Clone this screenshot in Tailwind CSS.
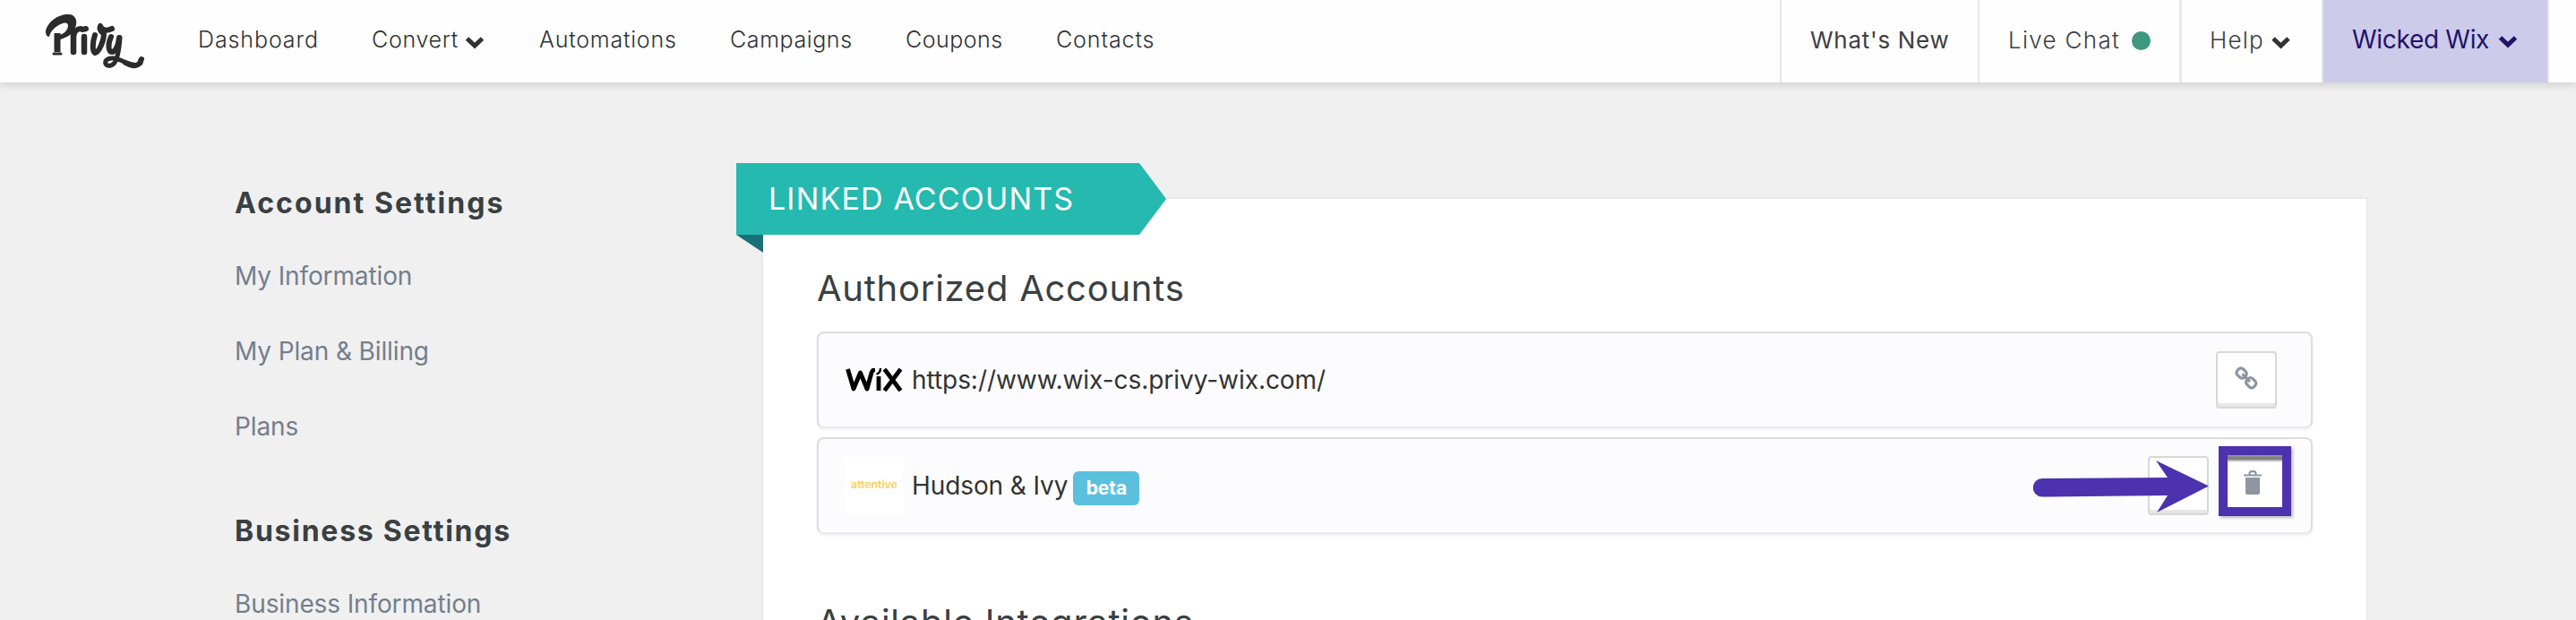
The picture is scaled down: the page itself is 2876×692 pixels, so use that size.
<!DOCTYPE html>
<html lang="en">
<head>
<meta charset="utf-8">
<title>Linked Accounts</title>
<script src="https://cdn.jsdelivr.net/npm/@tailwindcss/browser@4"></script>
</head>
<body class="w-[2876px] h-[692px] overflow-hidden bg-[#f0f0f0] font-['Inter','Liberation_Sans',sans-serif] text-[#333]">
<div class="h-[692px] overflow-hidden flex flex-col">
<header class="relative z-10 h-[92px] shrink-0 bg-[#fefefe] flex shadow-[0_2px_10px_rgba(0,0,0,0.16)]">
  <svg class="ml-[50px] mt-[14px] w-[112px] h-[64px] shrink-0" viewBox="0 0 112 64" fill="none" stroke="#2b2b2b" stroke-linecap="round" stroke-linejoin="round">
    <path d="M1 21C3 10 15 2 26 2C35 2 37 10 34 17C31 24 25 28 17 30L16 25C22 24 26 19 26 14C25 10 20 11 14 15C8 19 6 23 5 27C2 27 1 24 1 21Z" fill="#2b2b2b" stroke="none"/>
    <path d="M14 23V44" stroke-width="7" stroke-linecap="butt"/>
    <path d="M10 46L18 46" stroke-width="3"/>
    <path d="M32 24V44" stroke-width="6.500"/><path d="M32 27C33 20 37 18 40 18" stroke-width="6"/>
    <path d="M44 27V44" stroke-width="6.500"/><path d="M42 19L46 18" stroke-width="6"/>
    <path d="M56 25C53 34 53 43 56 45C61 44 66 31 66 24C61 20 61 17 62 15C64 20 69 21 75 18" stroke-width="6"/>
    <path d="M74 27C70 36 71 44 75 44C79 44 82 37 83 28" stroke-width="6"/>
    <path d="M84 28C83 38 83 48 78 56C73 62 66 59 68 54C74 46 88 56 98 58C105 60 108 57 107 53" stroke-width="5"/>
    <path d="M90 56C97 60 105 62 108 52" stroke-width="6"/>
  </svg>
  <nav class="flex ml-[59px] text-[25px] leading-[89px] font-light tracking-[0.9px] text-[#2f3336] whitespace-nowrap">
    <a class="w-[194px]">Dashboard</a>
    <a class="w-[187px] flex tracking-[0.7px]">Convert<svg class="ml-[7px] mt-[40px] w-[22px] h-[15px]" viewBox="0 0 22 15" fill="none" stroke="#333" stroke-width="5"><path d="M2.500 3L11 11L19.500 3"/></svg></a>
    <a class="w-[213px] tracking-[0.8px]">Automations</a>
    <a class="w-[196px] tracking-[0.6px]">Campaigns</a>
    <a class="w-[168px] tracking-[0.5px]">Coupons</a>
    <a>Contacts</a>
  </nav>
  <div class="ml-auto mr-[30px] flex text-[26px] leading-[90px] whitespace-nowrap text-[#3c4043]">
    <a class="w-[221px] border-l-2 border-[#e8e8e8] pl-[32px] tracking-[0.7px]">What's New</a>
    <a class="w-[225px] border-l-2 border-[#e8e8e8] pl-[32px] flex font-light tracking-[1.3px]">Live Chat<span class="ml-[13px] mt-[35px] size-[21px] rounded-full bg-[#3f977f]"></span></a>
    <a class="w-[159px] border-l-3 border-[#e8e8e8] pl-[31px] flex font-light tracking-[1.2px]">Help<svg class="ml-[7px] mt-[40px] w-[23px] h-[15px]" viewBox="0 0 22 15" fill="none" stroke="#333" stroke-width="5"><path d="M2.500 3L11 11L19.500 3"/></svg></a>
    <a class="w-[254px] border-x-2 border-[#e4e4e8] bg-[#cdcbea] pl-[32px] flex text-[28px] leading-[88px] tracking-[-0.3px] text-[#21136a]">Wicked Wix<svg class="ml-[10px] mt-[39px] w-[22px] h-[15px]" viewBox="0 0 22 15" fill="none" stroke="#21136a" stroke-width="5"><path d="M2.500 3L11 11L19.500 3"/></svg></a>
  </div>
</header>
<main class="flex h-[600px] shrink-0">
  <aside class="w-[850px] shrink-0 pl-[262px] pt-[104px] text-[28px] tracking-[-0.12px] text-[#737f8c]">
    <h2 class="h-[70px] leading-[62px] text-[32px] font-bold tracking-[2.05px] text-[#394042]">Account Settings</h2>
    <ul class="leading-[84px]"><li>My Information</li><li>My Plan &amp; Billing</li><li>Plans</li></ul>
    <h2 class="h-[70px] mt-[44px] leading-[62px] text-[32px] font-bold tracking-[1.75px] text-[#394042]">Business Settings</h2>
    <ul class="leading-[84px]"><li>Business Information</li></ul>
  </aside>
  <section class="relative mt-[128px] w-[1794px] h-[520px] shrink-0 border-2 border-[#e9e9ee] bg-white pl-[60px] pr-[60px] pt-[75px]">
    <div class="absolute left-[-30px] top-[-40px] w-[480px] h-[100px]">
      <svg class="absolute left-0 top-0 w-[480px] h-[100px]" viewBox="0 0 480 100"><path d="M0 0H450L480 40L450 80H0Z" fill="#25b9af"/><path d="M0 80H30V100Z" fill="#197177"/></svg>
      <span class="relative block pl-[36px] leading-[79px] text-[34px] tracking-[1.15px] text-white">LINKED ACCOUNTS</span>
    </div>
    <h3 class="h-[73px] leading-[50px] text-[40px] tracking-[0.75px] text-[#394042]">Authorized Accounts</h3>
    <div class="h-[108px] rounded-[8px] border-2 border-[#dcdde0] border-b-[#e9eaee] bg-[#fcfcfe] shadow-[0_2px_3px_rgba(0,0,0,0.06)] flex items-center pl-[30px] pr-[38px] text-[28px] tracking-[-0.05px]">
      <svg class="w-[64px] h-[26px]" viewBox="0 0 64 26" fill="none" stroke="#000" stroke-width="4.800" stroke-linejoin="round"><path d="M2.500 1L9 23L16.500 5L24 23L29 5C30 2 31 1.500 33 1.500"/><path d="M37 9V25"/><path d="M34.500 6.500C37 6 39 4 39 0" stroke-width="2.400"/><path d="M43.500 1L61.500 25M61.500 1L43.500 25"/></svg>
      <span class="ml-[10px]">https://www.wix-cs.privy-wix.com/</span>
      <span class="ml-auto w-[68px] h-[64px] rounded-[4px] border-2 border-[#d8d9d6] bg-white shadow-[inset_0_-4px_0_#e6e7e5] flex justify-center pt-[15px]">
        <svg class="w-[26px] h-[26px]" viewBox="0 0 26 26" fill="none" stroke="#8f96a1" stroke-width="3.200"><rect x="-5.500" y="-4.600" width="11" height="9.200" rx="3.600" transform="translate(7.600 7.600) rotate(45)"/><rect x="-5.500" y="-4.600" width="11" height="9.200" rx="3.600" transform="translate(18.200 18.200) rotate(45)"/><path d="M8.500 8.500L17 17"/></svg>
      </span>
    </div>
    <div class="relative mt-[10px] h-[108px] rounded-[8px] border-2 border-[#dcdde0] border-b-[#e9eaee] bg-[#fcfcfe] shadow-[0_2px_3px_rgba(0,0,0,0.06)] flex items-center pl-[30px] text-[28px] tracking-[-0.1px]">
      <span class="w-[64px] h-[64px] bg-white text-center text-[12.5px] leading-[62px] font-semibold tracking-[-0.1px] text-[#fbcf58]">attentive</span>
      <span class="ml-[10px]">Hudson &amp; Ivy</span>
      <span class="ml-[6px] mt-[6px] w-[74px] h-[38px] rounded-[6px] bg-[#5bc0de] text-center text-[21px] leading-[37px] font-bold text-white">beta</span>
      <span class="ml-auto mr-[114px] w-[68px] h-[66px] rounded-[4px] border-2 border-[#d8d9d6] bg-white shadow-[inset_0_-4px_0_#e6e7e5]"></span>
      <svg class="absolute left-[1356px] top-[22px] w-[200px] h-[62px]" viewBox="0 0 200 62"><path d="M10 22L150 21L137 2L196 30.500L138 60L150 41L10 42.500A10 10 0 0 1 10 22Z" fill="#4c32ae"/></svg>
      <div class="absolute left-[1563px] top-[8px] w-[81px] h-[78px] border-10 border-[#4c32ae] bg-white shadow-[2px_2px_3px_rgba(0,0,0,0.25)]">
        <div class="h-[8px] bg-linear-to-b from-[#999] via-[#777] to-white"></div>
        <svg class="ml-[18px] mt-[9px] w-[20px] h-[27px]" viewBox="0 0 20 27"><path d="M2 8H18V25Q18 27 16 27H4Q2 27 2 25Z" fill="#8f96a1"/><path d="M0 5.500H20M6.500 5V3.500Q6.500 1.200 9 1.200H11Q13.500 1.200 13.500 3.500V5" fill="none" stroke="#8f96a1" stroke-width="2.200"/></svg>
      </div>
    </div>
    <h3 class="mt-[74px] leading-[50px] text-[40px] tracking-[0.75px] text-[#394042]">Available Integrations</h3>
  </section>
</main>
</div>
</body>
</html>
